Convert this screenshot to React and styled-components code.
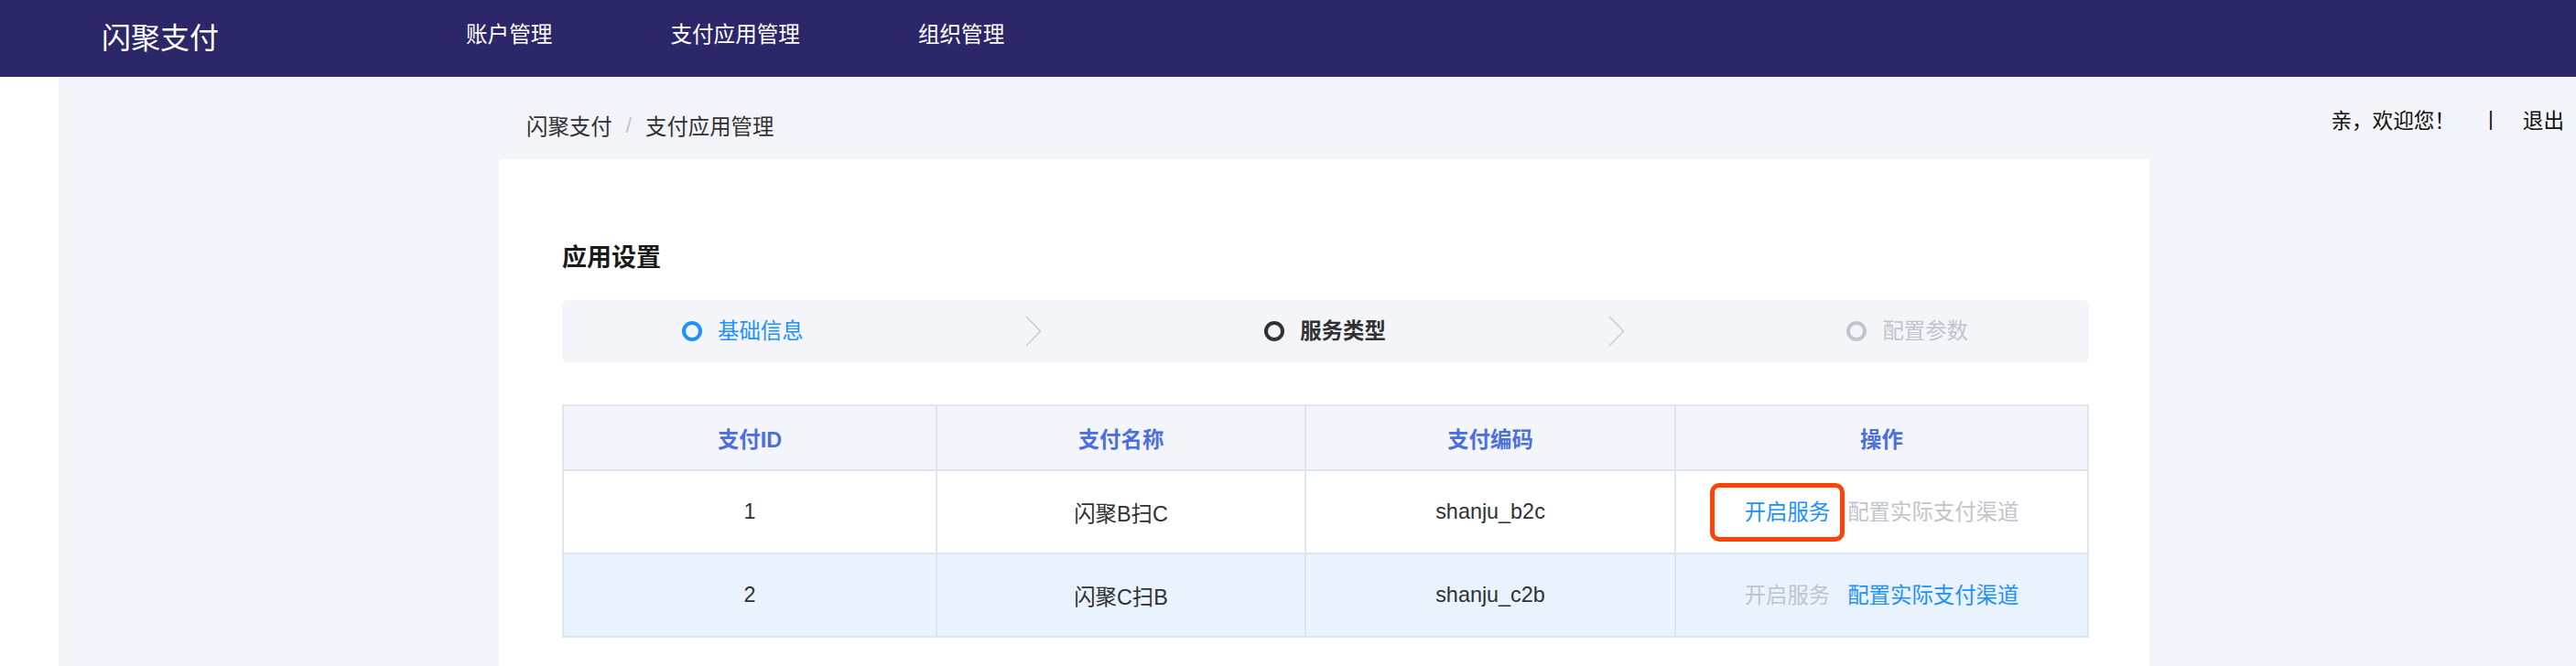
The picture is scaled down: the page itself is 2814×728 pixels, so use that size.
import React from "react";
import styled, { createGlobalStyle } from "styled-components";

const GlobalStyle = createGlobalStyle`
  html, body {
    margin: 0;
    padding: 0;
    background: #ffffff;
    font-family: "Liberation Sans", "Noto Sans CJK SC", sans-serif;
  }
  #root {
    min-height: 100vh;
    display: flex;
    flex-direction: column;
  }
`;

const Header = styled.header`
  height: 84px;
  flex-shrink: 0;
  background-color: #2b2768;
  display: flex;
  align-items: center;
  padding-left: 111px;
  color: #ffffff;
`;

const Logo = styled.div`
  font-size: 32px;
  line-height: 40px;
  width: 128px;
  margin-right: 270px;
  white-space: nowrap;
`;

const Nav = styled.nav`
  display: flex;
  gap: 129px;
  margin-bottom: 8px;
`;

const NavItem = styled.a`
  font-size: 23.6px;
  line-height: 30px;
  color: #ffffff;
  cursor: pointer;
  white-space: nowrap;
`;

const Body = styled.div`
  flex: 1;
  display: flex;
`;

const Side = styled.aside`
  width: 64px;
  flex-shrink: 0;
  background: #ffffff;
`;

const Main = styled.main`
  flex: 1;
  background: #f3f4f9;
  display: grid;
  grid-template-columns: 481px 1803px 1fr;
  grid-template-rows: 90px 1fr;
`;

const Crumbs = styled.div`
  grid-column: 2;
  grid-row: 1;
  display: flex;
  align-items: center;
  padding: 16px 0 0 30px;
  font-size: 23.4px;
  color: #303133;
`;

const CrumbSep = styled.span`
  color: #c0c4cc;
  margin: 0 15px;
`;

const Welcome = styled.div`
  grid-column: 3;
  grid-row: 1;
  display: flex;
  justify-content: flex-end;
  align-items: center;
  padding: 2px 13px 0 0;
  font-size: 22.6px;
  color: #111111;
  white-space: nowrap;
`;

const WelcomeSep = styled.span`
  margin: 0 32px 0 36px;
`;

const Card = styled.section`
  grid-column: 2;
  grid-row: 2;
  background: #ffffff;
  padding: 92px 66px 0 69px;
`;

const Title = styled.h3`
  margin: 0 0 30px;
  font-size: 27px;
  line-height: 32px;
  font-weight: 700;
  color: #1a1a1a;
`;

const Steps = styled.div`
  height: 68px;
  border-radius: 6px;
  background: #f4f5f9;
  display: flex;
  align-items: center;
  justify-content: space-between;
  padding: 0 132px 0 131px;
  margin-bottom: 46px;
`;

const stepColors = {
  done: "#1e90ff",
  active: "#303133",
  todo: "#c0c4cc",
};

const Step = styled.div`
  display: flex;
  align-items: center;
  gap: 17px;
  font-size: 23.4px;
  line-height: 30px;
  color: ${(p) => stepColors[p.state]};
  font-weight: ${(p) => (p.state === "active" ? 700 : 400)};
`;

const StepDot = styled.span`
  width: 14px;
  height: 14px;
  border-radius: 50%;
  border: 4px solid currentColor;
`;

const Table = styled.table`
  width: 100%;
  border-collapse: collapse;
  border: 2px solid #dfe5ee;
  table-layout: fixed;
  font-size: 23.4px;
`;

const Th = styled.th`
  height: 69px;
  background: #f3f5fa;
  border: 2px solid #dfe5ee;
  color: #4c6fe0;
  font-weight: 700;
  text-align: center;
  padding: 0;
`;

const Tr = styled.tr`
  background: ${(p) => (p.highlight ? "#e8f3fe" : "#ffffff")};
`;

const Td = styled.td`
  height: 89px;
  border: 2px solid #dfe5ee;
  color: #303133;
  text-align: center;
  padding: 0;
`;

const Actions = styled.div`
  display: flex;
  justify-content: center;
  align-items: center;
  gap: 19px;
  line-height: 32px;
`;

const ActionLink = styled.span`
  position: relative;
  color: ${(p) => (p.disabled ? "#c0c4cc" : "#1e90ff")};
  cursor: ${(p) => (p.disabled ? "not-allowed" : "pointer")};
  white-space: nowrap;
`;

const Highlight = styled.span`
  position: absolute;
  left: -38px;
  right: -16px;
  top: -16px;
  bottom: -16px;
  border: 5px solid #ff4307;
  border-radius: 10px;
  pointer-events: none;
`;

function Chevron() {
  return (
    <svg width="18" height="34" viewBox="0 0 18 34" fill="none">
      <polyline points="1,1 16.5,17 1,33" stroke="#c8ccd3" strokeWidth="1.6" />
    </svg>
  );
}

const rows = [
  { id: 1, name: "闪聚B扫C", code: "shanju_b2c", open: true },
  { id: 2, name: "闪聚C扫B", code: "shanju_c2b", open: false },
];

export default function App() {
  return (
    <>
      <GlobalStyle />
      <Header>
        <Logo>闪聚支付</Logo>
        <Nav>
          <NavItem>账户管理</NavItem>
          <NavItem>支付应用管理</NavItem>
          <NavItem>组织管理</NavItem>
        </Nav>
      </Header>
      <Body>
        <Side />
        <Main>
          <Crumbs>
            <span>闪聚支付</span>
            <CrumbSep>/</CrumbSep>
            <span>支付应用管理</span>
          </Crumbs>
          <Welcome>
            <span>亲，欢迎您！</span>
            <WelcomeSep>|</WelcomeSep>
            <span>退出</span>
          </Welcome>
          <Card>
            <Title>应用设置</Title>
            <Steps>
              <Step state="done">
                <StepDot />
                基础信息
              </Step>
              <Chevron />
              <Step state="active">
                <StepDot />
                服务类型
              </Step>
              <Chevron />
              <Step state="todo">
                <StepDot />
                配置参数
              </Step>
            </Steps>
            <Table>
              <colgroup>
                <col style={{ width: "408px" }} />
                <col style={{ width: "403px" }} />
                <col style={{ width: "404px" }} />
                <col />
              </colgroup>
              <thead>
                <tr>
                  <Th>支付ID</Th>
                  <Th>支付名称</Th>
                  <Th>支付编码</Th>
                  <Th>操作</Th>
                </tr>
              </thead>
              <tbody>
                {rows.map((r) => (
                  <Tr key={r.id} highlight={!r.open}>
                    <Td>{r.id}</Td>
                    <Td>{r.name}</Td>
                    <Td>{r.code}</Td>
                    <Td>
                      <Actions>
                        <ActionLink disabled={!r.open}>
                          开启服务
                          {r.open && <Highlight />}
                        </ActionLink>
                        <ActionLink disabled={r.open}>配置实际支付渠道</ActionLink>
                      </Actions>
                    </Td>
                  </Tr>
                ))}
              </tbody>
            </Table>
          </Card>
        </Main>
      </Body>
    </>
  );
}
